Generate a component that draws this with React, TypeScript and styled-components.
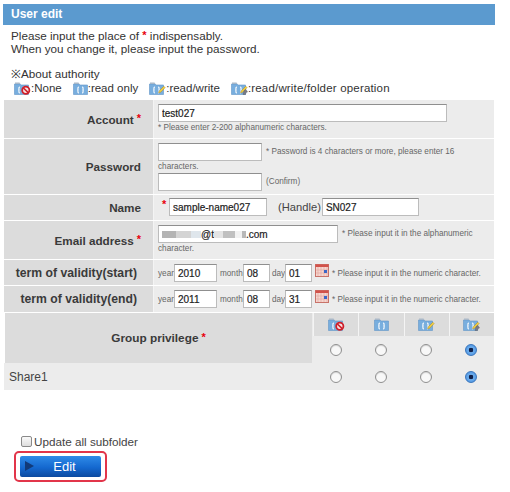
import { ReactNode } from 'react'
import styled, { createGlobalStyle } from 'styled-components'

const GlobalStyle = createGlobalStyle`
  html, body {
    margin: 0;
    padding: 0;
    background: white;
  }
  body {
    font-family: "Liberation Sans", Arial, sans-serif;
    font-size: 12px;
    color: #333;
  }
`

const Page = styled.div`
  width: 510px;
  height: 492px;
  padding: 4px 15px 0 3px;
  box-sizing: border-box;
  overflow: hidden;
`

const Title = styled.h1`
  margin: 0;
  height: 21px;
  line-height: 21px;
  padding-left: 8px;
  background-color: #5b9acf;
  color: white;
  font-size: 12px;
  font-weight: bold;
`

const Intro = styled.div`
  padding: 4px 0 0 8px;
  line-height: 13px;
  height: 75px;
  box-sizing: border-box;
`

const IntroLine = styled.div`
  font-size: 11.7px;
  white-space: nowrap;
`

const AuthTitle = styled(IntroLine)`
  margin-top: 12px;
`

const AuthRow = styled.div`
  display: flex;
  align-items: flex-end;
  margin-left: 3px;
  height: 15px;
  gap: 11px;
  font-size: 11.5px;
`

const AuthItem = styled.span`
  display: flex;
  align-items: flex-end;
  &:last-child {
    letter-spacing: 0.18px;
  }
`

const Star = styled.span`
  color: #e8000d;
  font-size: 11px;
  font-weight: bold;
  line-height: 0;
  position: relative;
  top: -1px;
`

const Form = styled.div`
  margin-left: 1px;
  display: grid;
  grid-template-columns: 150px 340px;
  row-gap: 1px;
`

const Label = styled.div<{ $h: number; $pad: number; $size: number }>`
  height: ${({ $h }) => $h}px;
  background-color: #dcdcdc;
  display: flex;
  align-items: center;
  justify-content: flex-end;
  padding-right: ${({ $pad }) => $pad}px;
  font-size: ${({ $size }) => $size}px;
  font-weight: bold;
  white-space: nowrap;
  color: #3a3a3a;
  border-right: 1px solid #f4f4f4;
  box-sizing: border-box;
  gap: 3px;
`

const Value = styled.div<{ $h: number; $top: number }>`
  height: ${({ $h }) => $h}px;
  background-color: #ececec;
  padding: ${({ $top }) => $top}px 4px 0 4px;
  box-sizing: border-box;
  font-size: 8.2px;
  line-height: 13px;
  color: #666;
`

const Field = styled.input<{ $w: number }>`
  width: ${({ $w }) => $w}px;
  height: 18px;
  box-sizing: border-box;
  border: 1px solid #bcbcbc;
  border-top-color: #8f8f8f;
  background: white;
  padding: 0 3px;
  margin: 0;
  font-family: "Liberation Sans", Arial, sans-serif;
  font-size: 10px;
  -webkit-text-stroke: 0.2px #222;
  color: #222;
  vertical-align: middle;
  border-radius: 0;
  outline: none;
`

const Note = styled.div`
  font-size: 8.2px;
  line-height: 12px;
  color: #666;
`

const InlineNote = styled.span`
  font-size: 8.2px;
  margin-left: 4px;
  color: #666;
`

const DateNote = styled(InlineNote)`
  margin-left: 3px;
`

const NameLine = styled.div`
  display: flex;
  align-items: center;
  padding-left: 4px;
`

const NameStar = styled(Star)`
  width: 7px;
  margin-top: -4px;
`

const Handle = styled.span`
  font-size: 11.2px;
  color: #444;
  margin: 0 1px 0 11px;
`

const FakeField = styled.div`
  display: inline-flex;
  align-items: center;
  width: 180px;
  height: 18px;
  box-sizing: border-box;
  border: 1px solid #bcbcbc;
  border-top-color: #8f8f8f;
  background: white;
  padding: 0 3px;
  vertical-align: middle;
  font-size: 10px;
  -webkit-text-stroke: 0.2px #222;
  color: #222;
`

const Masked = styled.span<{ $w: number; $c: string }>`
  display: inline-block;
  width: ${({ $w }) => $w}px;
  height: 7px;
  background-color: ${({ $c }) => $c};
`

const DateLine = styled.div`
  display: flex;
  align-items: center;
  height: 18px;
  font-size: 8.2px;
  color: #666;
  white-space: nowrap;
`

const DateWord = styled.span<{ $w: number }>`
  width: ${({ $w }) => $w}px;
`

const CalendarBox = styled.span`
  display: flex;
  margin: -6px 0 0 3px;
`

const GroupTable = styled.div`
  margin: 1px 0 0 2px;
  width: 489px;
  display: grid;
  grid-template-columns: 308px 1fr 1fr 1fr 1fr;
  grid-template-rows: 23px 27px 27px;
`

const GroupHead = styled.div`
  grid-row: span 2;
  background-color: #dcdcdc;
  border-right: 1px solid #ececec;
  display: flex;
  align-items: center;
  justify-content: center;
  gap: 3px;
  font-size: 11.8px;
  font-weight: bold;
  color: #3a3a3a;
  box-sizing: border-box;
`

const IconHead = styled.div`
  background-color: #dcdcdc;
  border-left: 1px solid #f4f4f4;
  display: flex;
  align-items: center;
  justify-content: center;
`

const RadioCell = styled.div`
  background-color: #ececec;
  display: flex;
  align-items: center;
  justify-content: center;
  padding-top: 1px;
`

const ShareName = styled.div`
  background-color: #ececec;
  display: flex;
  align-items: center;
  padding-left: 5px;
  margin-left: -1px;
  font-size: 12px;
  color: #444;
`

const Radio = styled.input.attrs({ type: 'radio' })`
  appearance: none;
  width: 12px;
  height: 12px;
  margin: 0;
  border-radius: 50%;
  border: 1.5px solid #8f8f8f;
  background: #f8f8f8;
  box-shadow: inset 0 1px 1px rgba(0, 0, 0, 0.15);
  &:checked {
    border-color: #3a76bc;
    background: radial-gradient(circle, #10204a 0 2px, #6fb0ee 2.6px, #3f86dc 100%);
    box-shadow: none;
  }
`

const Update = styled.label`
  display: flex;
  align-items: center;
  gap: 2px;
  margin: 44px 0 0 18px;
  height: 14px;
  font-size: 11.7px;
  color: #444;
`

const Check = styled.input.attrs({ type: 'checkbox' })`
  appearance: none;
  width: 11px;
  height: 11px;
  margin: 0;
  border: 1px solid #8a8a8a;
  border-radius: 2px;
  background: linear-gradient(#fafafa, #dedede);
`

const Highlight = styled.div`
  margin: 3px 0 0 11px;
  width: 93px;
  height: 31px;
  box-sizing: border-box;
  border: 2px solid #e2354a;
  border-radius: 5px;
  padding: 3px 4px;
`

const EditButton = styled.button`
  display: flex;
  align-items: center;
  justify-content: center;
  width: 81px;
  height: 21px;
  padding: 0 0 0 8px;
  border: 0;
  border-radius: 2px;
  background: linear-gradient(#2f8be8, #1468cf 55%, #0c4aa0);
  color: white;
  font-family: inherit;
  font-size: 13px;
  position: relative;

  &::before {
    content: '';
    position: absolute;
    left: 5px;
    top: 5px;
    border-left: 9px solid #123a78;
    border-top: 5px solid transparent;
    border-bottom: 5px solid transparent;
  }
`

type Access = 'none' | 'read' | 'write' | 'folder'

const FolderIcon = ({ kind }: { kind: Access }) => (
  <svg width={kind === 'read' ? 15 : 17} height="13" viewBox={kind === 'read' ? '0 0 15 13' : '0 0 17 13'}>
    <path d="M0.5 2 L6 2 L7 3 L14.5 3 L14.5 12.5 L0.5 12.5 Z" fill="#78aede" stroke="#6196c8" strokeWidth="0.6" />
    <path d="M1 0.5 L5.5 0.5 L6.5 2 L1 2 Z" fill="#a9b8c8" />
    <path d="M6 5 Q4.6 5 5 7 Q5.2 8 4.2 8 Q5.2 8 5 9 Q4.6 11 6 11" fill="none" stroke="white" strokeWidth="1.1" />
    <path d="M9 5 Q10.4 5 10 7 Q9.8 8 10.8 8 Q9.8 8 10 9 Q10.4 11 9 11" fill="none" stroke="white" strokeWidth="1.1" />
    {kind === 'none' && (
      <g>
        <circle cx="11.8" cy="8.3" r="3.6" fill="#f6e4e4" stroke="#cf1f2a" strokeWidth="1.8" />
        <path d="M9.4 6 L14.2 10.6" stroke="#cf1f2a" strokeWidth="1.6" />
      </g>
    )}
    {(kind === 'write' || kind === 'folder') && (
      <path d="M9.5 11 L10.3 8.8 L14.8 4.2 L16.2 5.6 L11.7 10.2 Z" fill="#f4cf3e" stroke="#9a7a22" strokeWidth="0.4" />
    )}
    {kind === 'folder' && (
      <path d="M12 12.5 L13.2 8.5 L15 7.5 L16.5 10 L15 10.5 L14.5 12.5 Z" fill="#7c7c86" stroke="#55555e" strokeWidth="0.4" />
    )}
  </svg>
)

const CalendarIcon = () => (
  <svg width="14" height="13" viewBox="0 0 14 13">
    <rect x="0.5" y="0.5" width="13" height="12" fill="#f6d6d0" stroke="#c8736a" />
    <rect x="0.5" y="0.5" width="13" height="2.5" fill="#d2524a" />
    <path d="M3 3 V12 M6 3 V12 M9 3 V12 M12 3 V12 M1 6 H13 M1 9 H13" stroke="#e4a9a0" strokeWidth="0.7" />
    <rect x="9" y="6" width="3" height="3" fill="#3a66c8" />
  </svg>
)

const DateRow = ({ year, month, day }: { year: string; month: string; day: string }) => (
  <DateLine>
    <DateWord $w={16}>year</DateWord>
    <Field $w={43} defaultValue={year} />
    <DateWord $w={3} />
    <DateWord $w={23}>month</DateWord>
    <Field $w={27} defaultValue={month} />
    <DateWord $w={2} />
    <DateWord $w={13}>day</DateWord>
    <Field $w={27} defaultValue={day} />
    <CalendarBox>
      <CalendarIcon />
    </CalendarBox>
    <DateNote>* Please input it in the numeric character.</DateNote>
  </DateLine>
)

const Row = ({
  label,
  star,
  h,
  top,
  pad = 12,
  size = 11.7,
  children,
}: {
  label: string
  star?: boolean
  h: number
  top: number
  pad?: number
  size?: number
  children: ReactNode
}) => (
  <>
    <Label $h={h} $pad={pad} $size={size}>
      {label}
      {star && <Star>*</Star>}
    </Label>
    <Value $h={h} $top={top}>
      {children}
    </Value>
  </>
)

const accessList: { kind: Access; text: string }[] = [
  { kind: 'none', text: ':None' },
  { kind: 'read', text: ':read only' },
  { kind: 'write', text: ':read/write' },
  { kind: 'folder', text: ':read/write/folder operation' },
]

const kinds: Access[] = ['none', 'read', 'write', 'folder']

export default function App() {
  return (
    <Page>
      <GlobalStyle />
      <Title>User edit</Title>
      <Intro>
        <IntroLine>
          Please input the place of <Star>*</Star> indispensably.
        </IntroLine>
        <IntroLine>When you change it, please input the password.</IntroLine>
        <AuthTitle>※About authority</AuthTitle>
        <AuthRow>
          {accessList.map((item) => (
            <AuthItem key={item.kind}>
              <FolderIcon kind={item.kind} />
              {item.text}
            </AuthItem>
          ))}
        </AuthRow>
      </Intro>
      <Form>
        <Row label="Account" star h={38} top={4}>
          <Field $w={289} defaultValue="test027" />
          <Note>* Please enter 2-200 alphanumeric characters.</Note>
        </Row>
        <Row label="Password" h={55} top={4}>
          <Field $w={104} type="text" />
          <InlineNote>* Password is 4 characters or more, please enter 16</InlineNote>
          <Note>characters.</Note>
          <Field $w={104} type="text" />
          <InlineNote>(Confirm)</InlineNote>
        </Row>
        <Row label="Name" h={25} top={3}>
          <NameLine>
            <NameStar>*</NameStar>
            <Field $w={98} defaultValue="sample-name027" />
            <Handle>(Handle)</Handle>
            <Field $w={97} defaultValue="SN027" />
          </NameLine>
        </Row>
        <Row label="Email address" star h={38} top={4}>
          <FakeField>
            <Masked $w={14} $c="#b4b4b4" />
            <Masked $w={15} $c="#d4d4d4" />
            <Masked $w={10} $c="#dfe6ec" />
            @t
            <Masked $w={9} $c="#e4e4e4" />
            <Masked $w={12} $c="#c0c0c0" />
            <Masked $w={7} $c="#f2f2f2" />
            <Masked $w={4} $c="#b8b8b8" />
            .com
          </FakeField>
          <InlineNote>* Please input it in the alphanumeric</InlineNote>
          <Note>character.</Note>
        </Row>
        <Row label="term of validity(start)" h={25} top={4} pad={16} size={12.2}>
          <DateRow year="2010" month="08" day="01" />
        </Row>
        <Row label="term of validity(end)" h={26} top={4} pad={16} size={12.2}>
          <DateRow year="2011" month="08" day="31" />
        </Row>
      </Form>
      <GroupTable>
        <GroupHead>
          Group privilege <Star>*</Star>
        </GroupHead>
        {kinds.map((kind) => (
          <IconHead key={kind}>
            <FolderIcon kind={kind} />
          </IconHead>
        ))}
        {kinds.map((kind) => (
          <RadioCell key={kind}>
            <Radio name="head" defaultChecked={kind === 'folder'} />
          </RadioCell>
        ))}
        <ShareName>Share1</ShareName>
        {kinds.map((kind) => (
          <RadioCell key={kind}>
            <Radio name="share1" defaultChecked={kind === 'folder'} />
          </RadioCell>
        ))}
      </GroupTable>
      <Update>
        <Check />
        Update all subfolder
      </Update>
      <Highlight>
        <EditButton>Edit</EditButton>
      </Highlight>
    </Page>
  )
}
